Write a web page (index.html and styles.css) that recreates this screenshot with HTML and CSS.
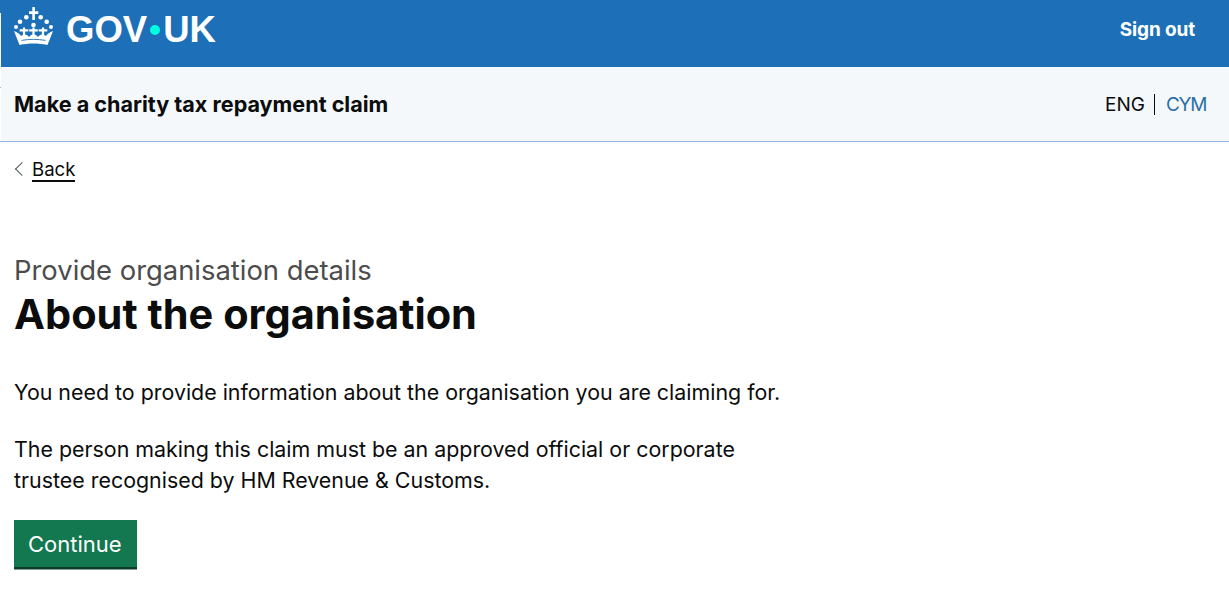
FILE: index.html
```html
<!DOCTYPE html>
<html lang="en">
<head>
<meta charset="utf-8">
<title>About the organisation</title>
<link rel="stylesheet" href="styles.css">
</head>
<body>
<a class="skip" href="#main" aria-label="Skip to main content"></a>
<header class="topbar">
  <a class="brand" href="#">
    <svg class="crown" viewBox="0 0 40 38" width="40" height="38" aria-hidden="true">
      <g fill="#fff">
        <path d="M18.300 0h2.600v4.300h3.400v2.600h-3.400v6.100h-2.600V6.900H15V4.300h3.300z"/>
        <circle cx="19.500" cy="18" r="2.300"/>
        <circle cx="12.300" cy="10.300" r="2.300"/><circle cx="26.700" cy="10.300" r="2.300"/>
        <circle cx="6" cy="14.700" r="2.300"/><circle cx="32.700" cy="14.700" r="2.300"/>
        <circle cx="2" cy="20" r="2"/><circle cx="37" cy="20" r="2"/>
        <path d="M18.400 20.500h2.200v1.800h3.200v2.200h-3.200v4h-2.200v-4h-3.200v-2.200h3.200z"/>
        <path d="M8.900 20.500h2.200v1.800h3.200v2.200h-3.200v4H8.900v-4H5.700v-2.200h3.200z"/>
        <path d="M27.900 20.500h2.200v1.800h3.200v2.200h-3.200v4h-2.200v-4h-3.200v-2.200h3.200z"/>
        <path d="M0 24c3 1 6 3 7 5 2-1.500 4-2 6-1l2 2c1.500-2 3-2.500 4.500-2.500S22.500 28 24 30l2-2c2-1 4-.5 6 1 1-2 4-4 7-5l-5.500 14c-9-2-19-2-28 0z"/>
      </g>
      <path d="M7.500 33.400c8-1.400 16-1.400 24 0" fill="none" stroke="#1d70b8" stroke-width=".9"/>
    </svg>
    <span class="wordmark">GOV<span class="dot"></span>UK</span>
  </a>
  <a class="signout" href="#">Sign out</a>
</header>
<div class="subbar">
  <span class="service">Make a charity tax repayment claim</span>
  <span class="lang"><span class="lang-on">ENG</span><a class="lang-off" href="#">CYM</a></span>
</div>
<main class="page" id="main">
  <a class="back" href="#"><span class="chev"></span><span class="back-text">Back</span></a>
  <p class="caption">Provide organisation details</p>
  <h1 class="title">About the organisation</h1>
  <p class="body first">You need to provide information about the organisation you are claiming for.</p>
  <p class="body narrow">The person making this claim must be an approved official or corporate trustee recognised by HM Revenue &amp; Customs.</p>
  <a class="button" href="#">Continue</a>
</main>
</body>
</html>
```
FILE: styles.css
```css
* { box-sizing: border-box; }
html, body { margin: 0; padding: 0; background: #fff; }
body { font-family: Inter, "Liberation Sans", sans-serif; color: #0b0c0c; height: 591px; overflow: hidden; }
a { color: inherit; text-decoration: none; }
.skip { position: absolute; left: 0; top: 13px; width: 1px; height: 128px; background: #fff; }
.skip::after { content: ""; position: absolute; left: 0; top: 74px; width: 1px; height: 1px; background: #8eb8dc; }
.topbar { height: 67px; background: #1d70b8; display: flex; justify-content: space-between; padding: 0 34px 0 14px; color: #fff; }
.brand { display: flex; align-items: flex-start; gap: 12px; padding-top: 7px; }
.crown { display: block; }
.wordmark { display: flex; align-items: center; margin-top: 1px; font-family: "Liberation Sans", sans-serif; font-weight: 700; font-size: 36.500px; line-height: 44px; }
.dot { width: 10px; height: 10px; border-radius: 50%; background: #00ffe0; margin: 0 3px 0 3px; }
.signout { font-size: 19px; font-weight: 700; line-height: 26px; margin-top: 17px; letter-spacing: -0.15px; }
.subbar { height: 75px; background: #f4f8fb; border-bottom: 1px solid #8eb8dc; display: flex; justify-content: space-between; align-items: center; padding: 0 23px 0 14px; }
.service { font-size: 21.600px; font-weight: 700; line-height: 29px; }
.lang { display: flex; align-items: center; font-size: 19px; line-height: 21px; }
.lang-on { padding-right: 9px; border-right: 1px solid #0b0c0c; }
.lang-off { padding-left: 11px; color: #2a6ea8; letter-spacing: -1.300px; }
.page { padding: 0 14px; }
.back { display: inline-flex; align-items: flex-start; height: 26px; margin-top: 17px; font-size: 18.600px; line-height: 21px; }
.chev { width: 10px; height: 10px; border-left: 1px solid #505a5f; border-bottom: 1px solid #505a5f; transform: rotate(45deg); margin: 5px 5px 0 3px; }
.back-text { border-bottom: 2px solid #0b0c0c; }
.caption { margin: 69px 0 0; font-size: 27.400px; line-height: 32px; color: #4c4c4c; }
.title { margin: 0; font-size: 41.500px; font-weight: 700; line-height: 56px; }
.body { margin: 0; font-size: 21.400px; line-height: 31px; }
.first { margin-top: 35px; }
.narrow { margin-top: 26px; max-width: 760px; }
.button { display: inline-block; margin-top: 24px; background: #13774f; color: #fff; font-size: 22px; line-height: 48px; height: 47px; padding: 0 15px 0 14px; box-shadow: 0 2px 0 #0a3b28, 0 3px 0 #8a9a94; }
```
